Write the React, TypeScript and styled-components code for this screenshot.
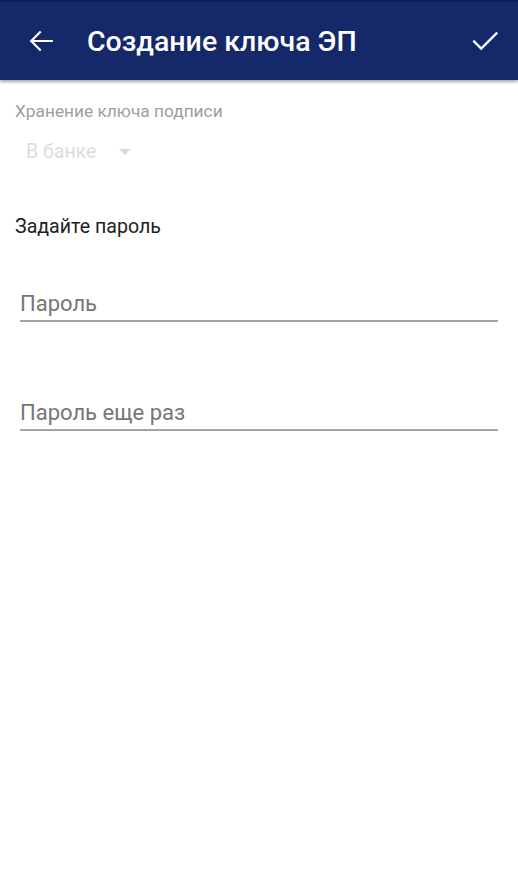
import React from "react";
import styled, { createGlobalStyle } from "styled-components";

const Global = createGlobalStyle`
  html, body { margin: 0; padding: 0; background: #fff; }
  body { font-family: Roboto, "Noto Sans", sans-serif; }
`;

const Page = styled.div`
  width: 518px;
  min-height: 885px;
  background: #fff;
  display: flex;
  flex-direction: column;
`;

const Toolbar = styled.header`
  height: 80px;
  background: #14286a;
  border-top: 2px solid #0f1f55;
  box-sizing: border-box;
  display: flex;
  align-items: center;
  padding: 0 20px 0 28px;
  box-shadow: 0 2px 3px rgba(0, 0, 0, 0.35);
  position: relative;
  z-index: 1;
`;

const IconButton = styled.button`
  width: 26px;
  height: 26px;
  padding: 0;
  border: 0;
  background: transparent;
  display: flex;
  align-items: center;
  justify-content: center;
  cursor: pointer;
`;

const Title = styled.h1`
  margin: 0 0 0 33px;
  flex: 1;
  font-family: Roboto, sans-serif;
  font-weight: 500;
  font-size: 28.5px;
  color: #fff;
`;

const Content = styled.main`
  display: flex;
  flex-direction: column;
  padding: 0 20px 0 15px;
`;

const Caption = styled.div`
  margin-top: 20px;
  font-size: 17.3px;
  color: #9e9e9e;
  line-height: 22px;
`;

const Spinner = styled.div`
  display: flex;
  align-items: center;
  gap: 23px;
  margin-top: 18px;
  padding-left: 11px;
  font-size: 19.5px;
  color: #dcdcdc;
  line-height: 24px;
`;

const Arrow = styled.span`
  width: 0;
  height: 0;
  border-left: 6px solid transparent;
  border-right: 6px solid transparent;
  border-top: 6px solid #dcdcdc;
`;

const SectionLabel = styled.div`
  margin-top: 51px;
  font-size: 19.6px;
  color: #212121;
  line-height: 24px;
`;

const Field = styled.div<{ $top: number }>`
  margin-top: ${(p) => p.$top}px;
  margin-left: 5px;
  border-bottom: 2px solid #a4a4a4;
  padding-bottom: 2px;
  font-size: 22px;
  color: #767676;
  line-height: 28px;
`;

export default function App() {
  return (
    <Page>
      <Global />
      <Toolbar>
        <IconButton aria-label="Назад">
          <svg width="26" height="26" viewBox="0 0 24 24" fill="none">
            <path d="M22 12H3M11 4L3 12l8 8" stroke="#fff" strokeWidth="2" strokeLinecap="square" />
          </svg>
        </IconButton>
        <Title>Создание ключа ЭП</Title>
        <IconButton aria-label="Готово">
          <svg width="26" height="26" viewBox="0 0 24 24" fill="none">
            <path d="M2 12.5l6.5 6.5L22.5 5" stroke="#fff" strokeWidth="2.2" strokeLinecap="square" />
          </svg>
        </IconButton>
      </Toolbar>
      <Content>
        <Caption>Хранение ключа подписи</Caption>
        <Spinner>
          В банке
          <Arrow />
        </Spinner>
        <SectionLabel>Задайте пароль</SectionLabel>
        <Field $top={51}>Пароль</Field>
        <Field $top={77}>Пароль еще раз</Field>
      </Content>
    </Page>
  );
}
